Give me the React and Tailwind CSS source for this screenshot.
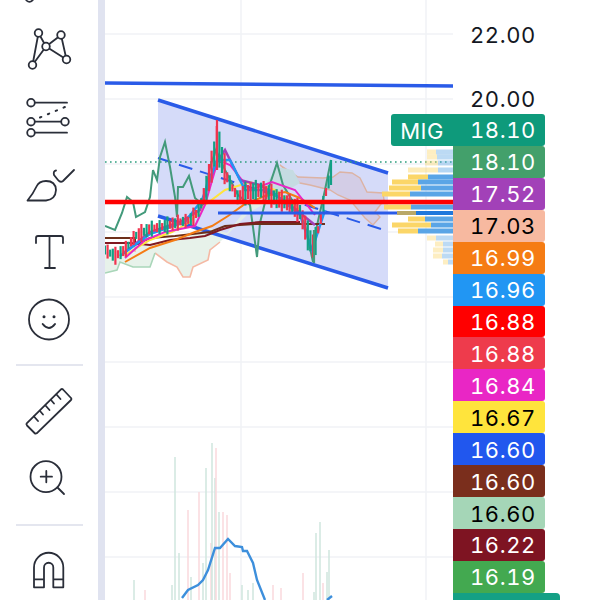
import React from 'react';

const INK = '#2a2e39';

const labels = [
  ['18.10', 'bg-[#0e9a7b]', 'text-white'],
  ['18.10', 'bg-[#43a06b]', 'text-white'],
  ['17.52', 'bg-[#a241b8]', 'text-white'],
  ['17.03', 'bg-[#f7b9a0]', 'text-black'],
  ['16.99', 'bg-[#f57c14]', 'text-white'],
  ['16.96', 'bg-[#2196f3]', 'text-white'],
  ['16.88', 'bg-[#ff0000]', 'text-white'],
  ['16.88', 'bg-[#ee3b4c]', 'text-white'],
  ['16.84', 'bg-[#e926c5]', 'text-white'],
  ['16.67', 'bg-[#ffe43c]', 'text-black'],
  ['16.60', 'bg-[#2157ee]', 'text-white'],
  ['16.60', 'bg-[#7a2e1c]', 'text-white'],
  ['16.60', 'bg-[#a5d6b7]', 'text-black'],
  ['16.22', 'bg-[#7e1422]', 'text-white'],
  ['16.19', 'bg-[#43a950]', 'text-white'],
];

// [x1, x2, y, opacity] yellow part runs x1..x2, blue part x2..453
const profile = [
  [427, 436, 152, 0.4], [427, 437, 157, 0.4], [425, 438, 163, 0.4], [408, 438, 170, 0.45],
  [408, 428, 177, 1], [392, 418, 182, 1], [389, 421, 188, 1], [382, 410, 194, 1],
  [384, 411, 207, 1], [408, 425, 219, 1], [392, 431, 225, 1],
  [398, 418, 231, 1], [427, 436, 238, 0.4], [435, 443, 244, 0.4], [433, 443, 250, 0.4],
  [433, 442, 256, 0.4], [443, 448, 262, 0.4],
];

// [x, top, colour] volume bars, all of them run to the bottom of the pane
const G = '#cfe6de';
const R = '#fad9dd';
const volume = [
  [134, 580, G], [145, 590, R], [172, 585, G], [175, 457, G], [179, 553, G], [188, 510, R],
  [191, 577, G], [199, 492, R], [203, 563, G], [206, 468, G], [211, 543, R], [212, 443, G],
  [215, 478, G], [216, 448, R], [219, 512, G], [223, 512, R], [227, 515, R], [230, 573, R],
  [242, 585, G], [248, 590, G], [253, 583, G], [273, 585, R], [281, 588, R], [303, 573, R],
  [314, 592, G], [316, 533, G], [320, 522, G], [323, 583, R], [327, 572, G], [329, 550, G],
];

// mid price of the candles, [x, y] waypoints
const waypoints = [
  [105, 250], [115, 256], [125, 250], [135, 236], [150, 229], [165, 226], [180, 222], [190, 220],
  [198, 212], [206, 190], [212, 165], [217, 140], [222, 160], [228, 180], [238, 198], [248, 192],
  [262, 190], [275, 198], [290, 204], [300, 212], [308, 236], [314, 248], [320, 222], [328, 182],
];

const midAt = (x) => {
  for (let i = 1; i < waypoints.length; i++) {
    const [x0, y0] = waypoints[i - 1];
    const [x1, y1] = waypoints[i];
    if (x <= x1) return y0 + ((x - x0) / (x1 - x0)) * (y1 - y0);
  }
  return waypoints[waypoints.length - 1][1];
};

const spread = [9, 14, 7, 12, 18, 8, 13, 10, 16, 7];
const candles = [];
for (let x = 105, i = 0; x <= 329; x += 2.6, i++) {
  const boost = x > 205 && x < 226 ? 18 : x > 240 && x < 304 ? 6 : x > 304 && x < 318 ? 14 : 0;
  const h = spread[i % 10] + boost;
  candles.push({ x, y: midAt(x), h, up: i % 3 === 0 || i % 7 === 2 });
}

function Glyph({ from, to, children }) {
  return (
    <svg
      width="60"
      height={to - from}
      viewBox={`19 ${from} 60 ${to - from}`}
      fill="none"
      stroke={INK}
      strokeWidth="1.8"
      strokeLinecap="round"
      strokeLinejoin="round"
      className="shrink-0"
    >
      {children}
    </svg>
  );
}

function Sidebar() {
  return (
    <div className="w-[98px] h-[600px] shrink-0 flex flex-col items-center overflow-hidden bg-white">
      <Glyph from={0} to={84}>
        <circle cx="29.5" cy="-2" r="3.8" />
        <path d="M38.5 33L32.5 65M38.5 33L46 46.5M32.5 65L46 46.5M46 46.5L61 35M61 35L66.5 59.5M46 46.5L66.5 59.5" />
        <circle cx="38.5" cy="33" r="3.8" fill="white" />
        <circle cx="61" cy="35" r="3.8" fill="white" />
        <circle cx="46" cy="46.5" r="3.8" fill="white" />
        <circle cx="32.5" cy="65" r="3.8" fill="white" />
        <circle cx="66.5" cy="59.5" r="3.8" fill="white" />
      </Glyph>
      <Glyph from={84} to={152}>
        <path d="M35 102.7H67M35 121.7H61M35 132.7H67" />
        <path d="M40 117.5L65 107" strokeDasharray="1.5 7" strokeWidth="2" />
        <circle cx="31" cy="102.7" r="3.8" />
        <circle cx="31" cy="121.7" r="3.8" />
        <circle cx="65" cy="121.7" r="3.8" />
        <circle cx="31" cy="132.7" r="3.8" />
      </Glyph>
      <Glyph from={152} to={219}>
        <path d="M27.5 200.5L46 200.5Q55.5 199.5 56 190Q55.5 181 46 181Q39 181 36.5 186.5Q33 194 27.5 200.5Z" />
        <path d="M56 170.5Q53 171 54 175L58 180Q60.5 183 63 181L74 170" />
      </Glyph>
      <Glyph from={219} to={285}>
        <path d="M36 243V238Q36 236 38 236H61Q63 236 63 238V243M49.5 236V268M45 268H55" />
      </Glyph>
      <Glyph from={285} to={352}>
        <circle cx="49" cy="319.5" r="20" />
        <circle cx="44" cy="316.7" r="1.5" fill={INK} stroke="none" />
        <circle cx="54" cy="316.7" r="1.5" fill={INK} stroke="none" />
        <path d="M42.7 324Q49 332 55 324" strokeWidth="2" />
      </Glyph>
      <div className="w-[67px] h-[2px] mt-3 shrink-0 bg-[#e4e6ef]" />
      <Glyph from={366} to={444}>
        <path d="M26.7 423.3L61 389.3Q62 388.5 63 389.5L71 398Q72 399 71 400L36.7 433.3Q35.5 434 34.5 433L27 425.5Q26 424.3 26.7 423.3Z" />
        <path d="M34 416.5L38 421M40 411L43 414.5M45.5 405.5L49.5 410M51 400L54 403.5M56.5 394.5L60.5 399" />
      </Glyph>
      <Glyph from={444} to={512}>
        <circle cx="46" cy="476.7" r="15.5" />
        <path d="M40.7 476.7H52M46.3 471V482.3M57.5 487.5L64 494" />
      </Glyph>
      <div className="w-[67px] h-[2px] mt-3 shrink-0 bg-[#e4e6ef]" />
      <Glyph from={526} to={600}>
        <path d="M34 587.3V567.4A14.65 14.65 0 0 1 63.3 567.4V587.3H53.3V567.4A4.65 4.65 0 0 0 44 567.4V587.3ZM34 579.3H44M53.3 579.3H63.3" />
      </Glyph>
    </div>
  );
}

function Chart() {
  return (
    <svg width="348" height="600" viewBox="105 0 348 600" className="block">
      {/* grid */}
      <g stroke="#f1f2f6" strokeWidth="1.5">
        {[34, 99, 164, 232, 297, 362, 427, 492, 557].map((y) => (
          <line key={y} x1="105" x2="453" y1={y} y2={y} />
        ))}
        <line x1="241" x2="241" y1="0" y2="600" />
        <line x1="426" x2="426" y1="0" y2="600" />
      </g>

      {/* volume pane */}
      {volume.map(([x, top, c], i) => (
        <line key={i} x1={x} x2={x} y1={top} y2="600" stroke={c} strokeWidth="1.5" />
      ))}
      <path d="M182 598L188 590L198 585L203 580L208 570L215 548L220 548L228 539L235 546L242 547L243 551L247 551L253 563L257 580L265 600" fill="none" stroke="#3d8fdc" strokeWidth="2.4" />
      <path d="M327 600L332 596" fill="none" stroke="#3d8fdc" strokeWidth="2.4" />

      {/* channel */}
      <polygon points="158,100 388,173 388,288 158,216" fill="#d5dbf9" />

      {/* clouds */}
      <path d="M105 252L125 250L150 244L175 238L210 228L227 233L240 217L262 190L277 167L293 170L300 183L280 195L250 212L220 242L210 250L208 260L193 267L190 277L183 277L177 267L167 262L155 253L150 267L133 267L120 262L117 270L105 273Z" fill="#e3f0e6" opacity="0.85" />
      <path d="M155 253L167 262L177 267L183 277L190 277L193 267L208 260L210 250L220 242" fill="none" stroke="#f5b9a4" strokeWidth="1.6" />
      <path d="M105 273L117 270L120 262L133 267L150 267L155 253" fill="none" stroke="#a9d6b9" strokeWidth="1.6" />
      <path d="M105 238H135V252" fill="none" stroke="#f5b9a4" strokeWidth="1.6" />
      <path d="M280 165L298 177L323 178L333 177L340 172L352 173L360 178L367 192L383 193L384 200L375 212L380 217L373 225L365 218L350 200L338 195L330 190L310 185L300 183Z" fill="#d3cde6" stroke="#dcb3a4" strokeWidth="1.4" />
      <path d="M262 190L277 167L293 170L300 183L285 192L270 195Z" fill="#c5dbe2" />

      {/* channel borders and the mid dash */}
      <line x1="158" y1="100" x2="388" y2="173" stroke="#2a5be8" strokeWidth="3.5" />
      <line x1="158" y1="216" x2="388" y2="288" stroke="#2a5be8" strokeWidth="3.5" />
      <line x1="158" y1="158" x2="384" y2="230" stroke="#2a5be8" strokeWidth="2" strokeDasharray="14 8" />
      <line x1="105" y1="83" x2="453" y2="86" stroke="#2a5be8" strokeWidth="3.5" />

      {/* last price */}
      <line x1="105" y1="162" x2="453" y2="162" stroke="#2e9e7e" strokeWidth="1.6" strokeDasharray="1.6 3.4" />

      {/* dark green close line */}
      <path d="M105 226L115 230L122 213L127 197L133 202L136 217L145 212L150 197L153 170L157 180L160 157L165 142L170 167L175 197L177 217L178 187L183 187L189 176L195 198L203 205L210 167L216 150L225 170L238 195L250 205L257 257L260 223L268 190L277 163L283 185L295 205L305 225L313 262L316 230L325 190L331 160" fill="none" stroke="#439a7b" strokeWidth="2" />

      {/* moving averages */}
      <g fill="none" strokeWidth="2">
        <path d="M105 238H135V245L150 238L175 236L210 232L225 226L255 224H325" stroke="#6d2f1a" />
        <path d="M105 243H130L150 245L170 240L190 238L205 236L220 230L240 224L260 222L300 222" stroke="#801922" />
        <path d="M125 262L150 248L175 240L195 232L212 226L228 216L245 204L265 196L285 192L300 198L315 208" stroke="#f57c14" />
        <path d="M125 255L150 240L172 232L190 222L205 205L225 190L250 182L275 190L300 210" stroke="#ffe43c" />
        <path d="M125 258L145 240L165 232L195 226L205 205L218 160L230 165L250 190L272 182L295 190L315 215" stroke="#e926c5" />
        <path d="M125 252L150 232L180 222L200 210L215 165L225 150L240 180L260 185L290 205L315 225" stroke="#a241b8" strokeWidth="2.5" />
        <path d="M120 256L150 234L185 222L202 200L217 160L230 160L245 190L270 190L300 215L312 250L325 210" stroke="#2196f3" strokeWidth="2.5" />
      </g>

      {/* candles */}
      {candles.map((c) => (
        <line
          key={c.x}
          x1={c.x}
          x2={c.x}
          y1={c.y - c.h / 2}
          y2={c.y + c.h / 2}
          stroke={c.up ? '#12a085' : '#f0344f'}
          strokeWidth="2.2"
        />
      ))}
      <line x1="217" x2="217" y1="120" y2="170" stroke="#f0344f" strokeWidth="2.2" />
      <line x1="331" x2="331" y1="160" y2="185" stroke="#12a085" strokeWidth="2.2" />
      <line x1="314" x2="314" y1="230" y2="263" stroke="#439a7b" strokeWidth="2.2" />

      {/* levels */}
      <line x1="218" y1="213" x2="397" y2="213" stroke="#2a5be8" strokeWidth="3" />

      {/* volume profile */}
      {profile.map(([x1, x2, y, o]) => (
        <g key={y} opacity={o}>
          <rect x={x1} y={y - 2.5} width={x2 - x1} height="5" fill="#fbd668" />
          <rect x={x2} y={y - 2.5} width={453 - x2} height="5" fill="#5aa5e6" />
        </g>
      ))}
      <rect x="397" y="211" width="19" height="4" fill="#b9a868" />
      <rect x="416" y="211" width="37" height="4" fill="#1f78dc" />

      <line x1="105" y1="202" x2="453" y2="202" stroke="#ff0000" strokeWidth="4.5" />
    </svg>
  );
}

export default function App() {
  return (
    <div className="w-[600px] h-[600px] flex overflow-hidden bg-white font-['Inter',sans-serif]">
      <Sidebar />
      <div className="w-[7px] shrink-0 bg-[#e0e3f0]" />
      <div className="relative w-[348px] shrink-0">
        <Chart />
        <div className="absolute right-0 top-[114px] w-[62px] h-8 pt-[2px] flex items-center justify-center rounded-l-[3px] bg-[#0e9a7b] text-white text-[22px] tracking-[0.5px]">
          MIG
        </div>
      </div>
      <div className="flex-1 pt-[18px] text-[22px] tracking-[0.6px] tabular-nums bg-white">
        <div className="h-8 mb-8 pt-[2px] pl-[17px] flex items-center text-[#131722]">22.00</div>
        <div className="h-8 pt-[2px] pl-[17px] flex items-center text-[#131722]">20.00</div>
        {labels.map(([value, bg, fg], i) => (
          <div key={i} className={`w-[92px] h-[31.93px] pt-[2px] pl-[17px] flex items-center rounded-r-[3px] ${bg} ${fg}`}>
            {value}
          </div>
        ))}
        <div className="w-[107px] h-2 rounded-tr-[4px] bg-[#14a085]" />
      </div>
    </div>
  );
}
